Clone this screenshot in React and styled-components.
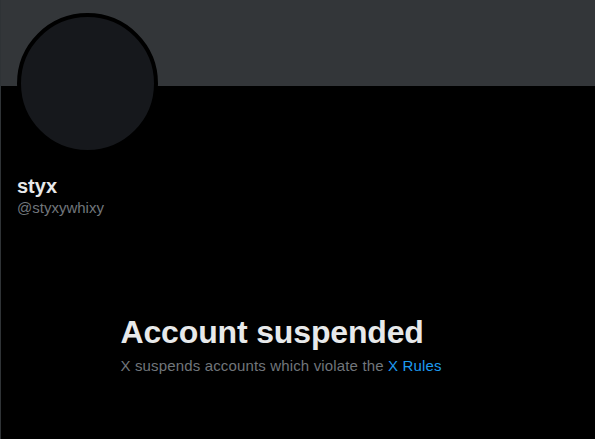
import styled, { createGlobalStyle } from "styled-components";

const GlobalStyle = createGlobalStyle`
  html, body {
    margin: 0;
    padding: 0;
    background: #000;
  }
  body {
    font-family: "Liberation Sans", Arial, sans-serif;
    -webkit-font-smoothing: antialiased;
  }
`;

const Column = styled.main`
  width: 595px;
  height: 439px;
  box-sizing: border-box;
  border-left: 1px solid #2f3336;
  background: #000;
  overflow: hidden;
`;

const Banner = styled.div`
  height: 86px;
  background: #333639;
`;

const ProfileHead = styled.div`
  padding: 0 16px;
`;

const Avatar = styled.div`
  width: 133px;
  height: 133px;
  margin-top: -73px;
  border-radius: 50%;
  border: 4px solid #000;
  background: #16181c;
`;

const Name = styled.div`
  margin-top: 20px;
  color: #e7e9ea;
  font-size: 20px;
  font-weight: 700;
  line-height: 24px;
`;

const Handle = styled.div`
  color: #71767b;
  font-size: 15px;
  line-height: 20px;
`;

const EmptyState = styled.section`
  width: 355px;
  margin: 96px auto 0;
`;

const Title = styled.h1`
  margin: 0 0 6px;
  color: #e7e9ea;
  font-size: 32px;
  font-weight: 800;
  line-height: 36px;
  letter-spacing: -0.15px;
`;

const Subtitle = styled.p`
  margin: 0;
  color: #71767b;
  font-size: 15px;
  line-height: 20px;
  letter-spacing: 0.15px;
`;

const Link = styled.a`
  color: #1d9bf0;
  text-decoration: none;
`;

export default function App() {
  return (
    <>
      <GlobalStyle />
      <Column>
        <Banner />
        <ProfileHead>
          <Avatar />
          <Name>styx</Name>
          <Handle>@styxywhixy</Handle>
        </ProfileHead>
        <EmptyState>
          <Title>Account suspended</Title>
          <Subtitle>
            X suspends accounts which violate the <Link href="#">X Rules</Link>
          </Subtitle>
        </EmptyState>
      </Column>
    </>
  );
}
